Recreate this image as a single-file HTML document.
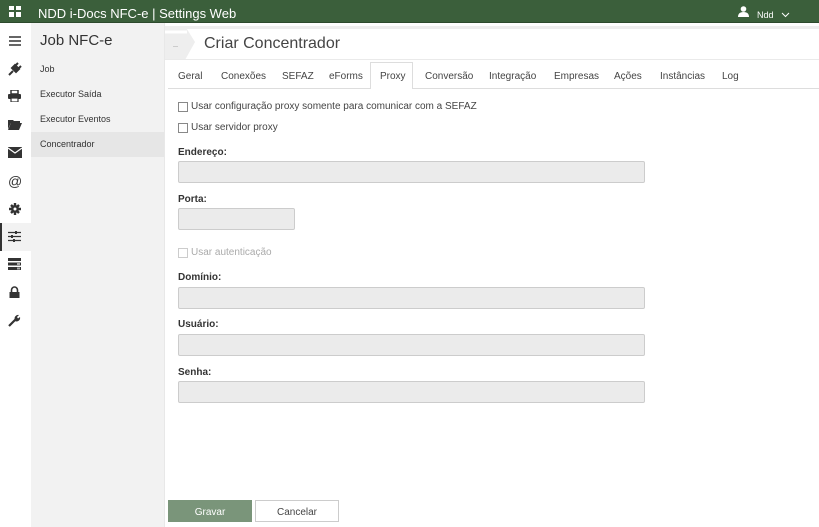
<!DOCTYPE html><html><head><style>
*{box-sizing:border-box;margin:0;padding:0}
body{width:819px;height:527px;overflow:hidden;font-family:"Liberation Sans",sans-serif;background:#fff;position:relative;color:#333}
.hdr{position:absolute;left:0;top:0;width:819px;height:23px;background:#3b5f3b;border-bottom:1px solid #2d4a2d;color:#fff}
.ib{position:absolute;left:0;top:23px;width:31px;height:504px;background:#fff}
.sb{position:absolute;left:31px;top:23px;width:133px;height:504px;background:#f2f2f2}
.abs{position:absolute}
.sb div.i{position:absolute;left:0;width:133px;height:25px;font-size:9px;padding-left:9px;line-height:25px;color:#333}
.tab{position:absolute;top:65px;font-size:10px;color:#444}
.lbl{position:absolute;left:178px;font-size:10px;font-weight:bold;color:#333}
.inp{position:absolute;left:178px;height:22px;background:#ebebeb;border:1px solid #ccc;border-radius:2px}
.cb{position:absolute;left:178px;width:10px;height:10px;border:1px solid #888;background:#fff}
.ct{position:absolute;left:191px;font-size:10px;color:#444}
.ic{position:absolute;left:8px;width:14px;height:12px;color:#333;font-size:13px;line-height:12px;text-align:center}
.btn{position:absolute;top:500px;width:84px;height:22px;font-size:10px;display:flex;align-items:center;justify-content:center;padding-top:2px}
</style></head><body>
<div class="hdr">
<svg class="abs" style="left:9px;top:6px" width="12" height="11"><rect x="0" y="0" width="5" height="4" fill="#fff"/><rect x="7" y="0" width="5" height="4" fill="#fff"/><rect x="0" y="6" width="5" height="5" fill="#fff"/><rect x="7" y="6" width="5" height="5" fill="#fff"/></svg>
<div class="abs" style="left:38px;top:6px;font-size:13px">NDD i-Docs NFC-e | Settings Web</div>
<svg class="abs" style="left:738px;top:6px" width="11" height="11"><circle cx="5.5" cy="3" r="2.8" fill="#fff"/><path d="M0 11 Q0 6 5.5 6 Q11 6 11 11Z" fill="#fff"/></svg>
<div class="abs" style="left:757px;top:10px;font-size:9px">Ndd</div>
<svg class="abs" style="left:781px;top:12px" width="9" height="6"><path d="M1 1l3.5 3.5L8 1" stroke="#fff" fill="none"/></svg>
</div>
<div class="ib">
<svg class="abs" style="left:9px;top:13px" width="12" height="10"><path d="M0 1h12M0 5h12M0 9h12" stroke="#333" stroke-width="1.6"/></svg>
<svg class="abs" style="left:8px;top:39px" width="14" height="14"><path d="M1 13l4-4M4 6l4 4 3-3-4-4zM8 3l2-2M11 6l2-2" stroke="#333" stroke-width="2" fill="#333"/></svg>
<svg class="abs" style="left:8px;top:67px" width="13" height="12"><rect x="3" y="0" width="7" height="4" fill="none" stroke="#333" stroke-width="1.5"/><rect x="0" y="4" width="13" height="5" rx="1" fill="#333"/><rect x="3" y="8" width="7" height="4" fill="#fff" stroke="#333" stroke-width="1.2"/></svg>
<svg class="abs" style="left:8px;top:96px" width="14" height="11"><path d="M0 1h5l1 1h6v2H3L0 10z" fill="#333"/><path d="M3 4h11l-3 7H0z" fill="#333"/></svg>
<svg class="abs" style="left:8px;top:124px" width="14" height="11"><rect width="14" height="11" fill="#333"/><path d="M0 1l7 5 7-5" stroke="#fff" fill="none" stroke-width="1.2"/></svg>
<div class="ic" style="top:152px;font-size:14px">@</div>
<svg class="abs" style="left:9px;top:180px" width="12" height="12"><circle cx="6" cy="6" r="4" fill="#333"/><path d="M6 0v12M0 6h12M2 2l8 8M10 2l-8 8" stroke="#333" stroke-width="2.4"/><circle cx="6" cy="6" r="1.5" fill="#fff"/></svg>
<div class="abs" style="left:0;top:200px;width:31px;height:28px;background:#f2f2f2;border-left:2px solid #333"></div>
<svg class="abs" style="left:8px;top:208px" width="13" height="11"><path d="M0 1.5h13M0 5.5h13M0 9.5h13" stroke="#333" stroke-width="1.2"/><rect x="7" y="0" width="2" height="3" fill="#333"/><rect x="3" y="4" width="2" height="3" fill="#333"/><rect x="5" y="8" width="2" height="3" fill="#333"/></svg>
<svg class="abs" style="left:8px;top:235px" width="13" height="12"><rect width="13" height="3" fill="#333"/><rect y="4.5" width="13" height="3" fill="#333"/><rect y="9" width="13" height="3" fill="#333"/><rect x="9" y="5" width="3" height="2" fill="#aaa"/><rect x="9" y="9.5" width="3" height="2" fill="#aaa"/></svg>
<svg class="abs" style="left:9px;top:263px" width="11" height="12"><path d="M2.5 6V4a3 3 0 0 1 6 0v2" stroke="#333" stroke-width="1.6" fill="none"/><rect x="0.5" y="6" width="10" height="6" fill="#333"/></svg>
<svg class="abs" style="left:8px;top:291px" width="13" height="13"><path d="M1 12l7-7" stroke="#333" stroke-width="2.2"/><path d="M7 6a3.5 3.5 0 0 1 4-5l-2 2 1 1.5 2-1.5a3.5 3.5 0 0 1-5 4z" fill="#333"/></svg>
</div>
<div class="sb">
<div class="abs" style="left:9px;top:9px;font-size:15px;color:#333">Job NFC-e</div>
<div class="i" style="top:34px">Job</div>
<div class="i" style="top:59px">Executor Saída</div>
<div class="i" style="top:84px">Executor Eventos</div>
<div class="i" style="top:109px;background:#e6e6e6">Concentrador</div>
</div>
<div class="abs" style="left:164px;top:23px;width:1px;height:504px;background:#e8e8e8"></div>
<div class="abs" style="left:165px;top:26px;width:654px;height:3px;background:#eee"></div>
<svg class="abs" style="left:165px;top:26px" width="30" height="34"><path d="M0 0h20l10 16-10 18H0z" fill="#eee"/><path d="M0 6h22l0 0" stroke="#fff" stroke-width="3"/><rect x="8" y="20" width="5" height="1" fill="#ccc"/></svg>
<div class="abs" style="left:204px;top:35px;font-size:16px;color:#444">Criar Concentrador</div>
<div class="abs" style="left:165px;top:59px;width:654px;height:1px;background:#eaeaea"></div>
<div class="abs" style="left:168px;top:88px;width:651px;height:1px;background:#ddd"></div>
<div class="abs" style="left:370px;top:62px;width:43px;height:27px;background:#fff;border:1px solid #ddd;border-bottom:none"></div>
<div class="tab" style="left:178px;top:71px">Geral</div>
<div class="tab" style="left:221px;top:71px">Conexões</div>
<div class="tab" style="left:282px;top:71px">SEFAZ</div>
<div class="tab" style="left:329px;top:71px">eForms</div>
<div class="tab" style="left:380px;top:71px">Proxy</div>
<div class="tab" style="left:425px;top:71px">Conversão</div>
<div class="tab" style="left:489px;top:71px">Integração</div>
<div class="tab" style="left:554px;top:71px">Empresas</div>
<div class="tab" style="left:614px;top:71px">Ações</div>
<div class="tab" style="left:660px;top:71px">Instâncias</div>
<div class="tab" style="left:722px;top:71px">Log</div>
<div class="cb" style="top:102px"></div><div class="ct" style="top:101px">Usar configuração proxy somente para comunicar com a SEFAZ</div>
<div class="cb" style="top:123px"></div><div class="ct" style="top:122px">Usar servidor proxy</div>
<div class="lbl" style="top:147px">Endereço:</div><div class="inp" style="top:161px;width:467px"></div>
<div class="lbl" style="top:194px">Porta:</div><div class="inp" style="top:208px;width:117px"></div>
<div class="cb" style="top:248px;border-color:#ccc"></div><div class="ct" style="top:247px;color:#aaa">Usar autenticação</div>
<div class="lbl" style="top:272px">Domínio:</div><div class="inp" style="top:287px;width:467px"></div>
<div class="lbl" style="top:319px">Usuário:</div><div class="inp" style="top:334px;width:467px"></div>
<div class="lbl" style="top:367px">Senha:</div><div class="inp" style="top:381px;width:467px"></div>
<div class="btn" style="left:168px;background:#7a957a;color:#fff">Gravar</div>
<div class="btn" style="left:255px;background:#fff;border:1px solid #ccc;color:#444">Cancelar</div>
</body></html>
